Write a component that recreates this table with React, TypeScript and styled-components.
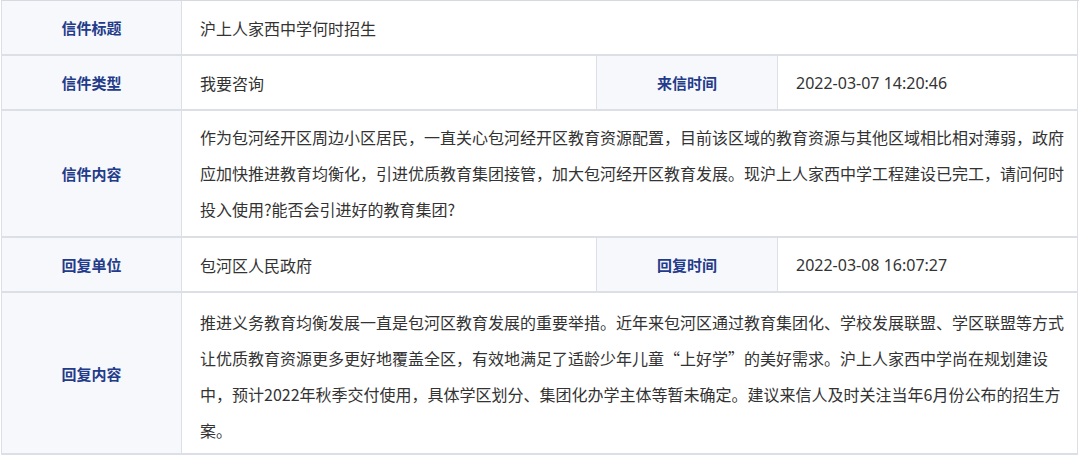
import { FC, ReactNode } from 'react';
import styled, { createGlobalStyle } from 'styled-components';

const GlobalStyle = createGlobalStyle`
	html, body {
		margin: 0;
		padding: 0;
		background: #ffffff;
	}
	body {
		font-family: "Noto Sans", "Noto Sans CJK SC", sans-serif;
	}
`;

type FieldProps = {
	label: string;
	children: ReactNode;
	wide?: boolean;
};

const Field: FC<FieldProps> = ({ label, children, wide }) => (
	<>
		<LabelCell>{label}</LabelCell>
		<ValueCell $wide={wide}>{children}</ValueCell>
	</>
);

const App: FC = () => (
	<>
		<GlobalStyle />
		<Table>
			<Field label="信件标题" wide>
				沪上人家西中学何时招生
			</Field>
			<Field label="信件类型">我要咨询</Field>
			<Field label="来信时间">2022-03-07 14:20:46</Field>
			<Field label="信件内容" wide>
				<Paragraph>
					作为包河经开区周边小区居民，一直关心包河经开区教育资源配置，目前该区域的教育资源与其他区域相比相对薄弱，政府应加快推进教育均衡化，引进优质教育集团接管，加大包河经开区教育发展。现沪上人家西中学工程建设已完工，请问何时投入使用?能否会引进好的教育集团?
				</Paragraph>
			</Field>
			<Field label="回复单位">包河区人民政府</Field>
			<Field label="回复时间">2022-03-08 16:07:27</Field>
			<Field label="回复内容" wide>
				<Paragraph $reply>
					推进义务教育均衡发展一直是包河区教育发展的重要举措。近年来包河区通过教育集团化、学校发展联盟、学区联盟等方式让优质教育资源更多更好地覆盖全区，有效地满足了适龄少年儿童“上好学”的美好需求。沪上人家西中学尚在规划建设中，预计2022年秋季交付使用，具体学区划分、集团化办学主体等暂未确定。建议来信人及时关注当年6月份公布的招生方案。
				</Paragraph>
			</Field>
		</Table>
	</>
);

const Table = styled.div`
	display: grid;
	grid-template-columns: 180px 415px 181px 300px;
	width: 1077px;
	margin-left: 1px;
	border-top: 1px solid #d6d9e0;
	border-left: 1px solid #dcdfe6;
`;

const LabelCell = styled.div`
	display: flex;
	align-items: center;
	justify-content: center;
	min-height: 55px;
	box-sizing: border-box;
	border-right: 1px solid #dcdfe6;
	border-bottom: 2px solid #dcdfe6;
	background-color: #f6f8fb;
	color: #233b8a;
	font-family: "Noto Sans CJK SC", sans-serif;
	font-size: 15px;
	font-weight: bold;
`;

const ValueCell = styled.div<{ $wide?: boolean }>`
	grid-column: ${({ $wide }) => ($wide ? 'span 3' : 'span 1')};
	display: flex;
	align-items: center;
	min-height: 55px;
	box-sizing: border-box;
	padding: 0 10px 0 18px;
	border-right: 1px solid #dcdfe6;
	border-bottom: 2px solid #dcdfe6;
	color: #333333;
	font-size: 16px;
`;

const Paragraph = styled.p<{ $reply?: boolean }>`
	margin: 0;
	padding: ${({ $reply }) => ($reply ? '11px 0 5px' : '8px 0 9px')};
	line-height: 36px;
	font-family: "Noto Sans CJK SC", sans-serif;
`;

export default App;
